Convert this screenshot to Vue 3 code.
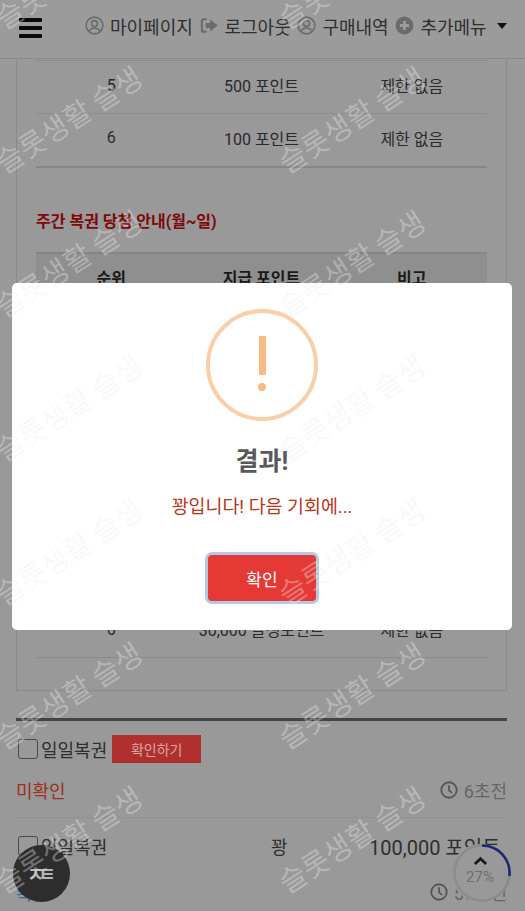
<script setup>
const firstRows = [
  { rank: 5, point: '500 포인트', note: '제한 없음' },
  { rank: 6, point: '100 포인트', note: '제한 없음' }
]
const weekRows = [
  { rank: 1, point: '1,000,000 슬생포인트', note: '제한 없음' },
  { rank: 2, point: '500,000 슬생포인트', note: '제한 없음' },
  { rank: 3, point: '300,000 슬생포인트', note: '제한 없음' },
  { rank: 4, point: '100,000 슬생포인트', note: '제한 없음' },
  { rank: 5, point: '50,000 슬생포인트', note: '제한 없음' },
  { rank: 6, point: '30,000 슬생포인트', note: '제한 없음' }
]
const marks = Array.from({ length: 14 }, (_, i) => i)
</script>

<template>
  <div class="page">
    <header class="topbar">
      <button class="burger"><span></span><span></span><span></span></button>
      <nav class="nav">
        <a class="nav-item">
          <svg class="ico" viewBox="0 0 20 20"><circle cx="10" cy="10" r="8.8" class="line" /><circle cx="10" cy="8" r="3.1" class="line" /><path d="M4.6 16c.8-2.4 2.6-3.4 5.4-3.4s4.6 1 5.4 3.4" class="line" /></svg>
          마이페이지
        </a>
        <a class="nav-item">
          <svg class="ico" viewBox="0 0 20 20"><path d="M7 3.5H3.6C2.7 3.5 2 4.2 2 5.1v9.8c0 .9.7 1.6 1.6 1.6H7" class="line thick" /><path d="M10.8 3.6 18.6 10l-7.8 6.4v-3.7H6V7.3h4.8z" fill="#6b6b6b" /></svg>
          로그아웃
        </a>
        <a class="nav-item">
          <svg class="ico" viewBox="0 0 20 20"><circle cx="10" cy="10" r="8.8" class="line" /><circle cx="10" cy="8" r="3.1" class="line" /><path d="M4.6 16c.8-2.4 2.6-3.4 5.4-3.4s4.6 1 5.4 3.4" class="line" /></svg>
          구매내역
        </a>
        <a class="nav-item">
          <svg class="ico" viewBox="0 0 20 20"><circle cx="10" cy="10" r="9.4" fill="#6b6b6b" /><path d="M10 5.2v9.6M5.2 10h9.6" stroke="#9b9b9b" stroke-width="3" fill="none" /></svg>
          추가메뉴
        </a>
        <i class="caret"></i>
      </nav>
    </header>

    <main class="content">
      <section class="guide">
        <table class="prize">
          <tbody>
            <tr v-for="row in firstRows" :key="row.rank">
              <td>{{ row.rank }}</td>
              <td>{{ row.point }}</td>
              <td>{{ row.note }}</td>
            </tr>
          </tbody>
        </table>

        <h4 class="guide-title">주간 복권 당첨 안내(월~일)</h4>

        <table class="prize week">
          <thead>
            <tr><th>순위</th><th>지급 포인트</th><th>비고</th></tr>
          </thead>
          <tbody>
            <tr v-for="row in weekRows" :key="row.rank">
              <td>{{ row.rank }}</td>
              <td>{{ row.point }}</td>
              <td>{{ row.note }}</td>
            </tr>
          </tbody>
        </table>
      </section>

      <section class="result-list">
        <div class="select-row">
          <span class="check"></span>
          <span class="ticket">일일복권</span>
          <button class="confirm-btn">확인하기</button>
        </div>
        <div class="status-row">
          <span class="unread">미확인</span>
          <span class="time">
            <svg class="clock" viewBox="0 0 20 20"><circle cx="10" cy="10" r="8.6" /><path d="M10 4.8V10.4l3.4 2.8" /></svg>
            6초전
          </span>
        </div>
        <div class="item-row">
          <span class="item-name">
            <span class="check"></span>
            <span class="ticket">일일복권</span>
          </span>
          <span class="item-result">꽝</span>
          <span class="item-point">100,000 포인트</span>
        </div>
        <div class="status-row last">
          <span class="read">확인</span>
          <span class="time">
            <svg class="clock" viewBox="0 0 20 20"><circle cx="10" cy="10" r="8.6" /><path d="M10 4.8V10.4l3.4 2.8" /></svg>
            55초전
          </span>
        </div>
      </section>
    </main>

    <button class="fab-left">ㅈㅌ</button>
    <div class="fab-top">
      <svg class="progress" viewBox="0 0 58 58">
        <circle cx="29" cy="29" r="27.5" class="track" />
        <path d="M29 1.5A27.5 27.5 0 0 1 56.4 32.2" class="arc" />
      </svg>
      <svg class="chevron" viewBox="0 0 16 10"><path d="M2 8.2 8 2.6l6 5.6" /></svg>
      <span class="percent">27%</span>
    </div>

    <div class="modal-wrap">
      <div class="modal">
        <div class="warn-icon">
          <span class="warn-bar"></span>
          <span class="warn-dot"></span>
        </div>
        <h2 class="modal-title">결과!</h2>
        <p class="modal-text">꽝입니다! 다음 기회에...</p>
        <button class="modal-btn">확인</button>
      </div>
    </div>

    <div class="watermark">
      <span v-for="m in marks" :key="m" class="mark"><span>슬롯생활 슬생</span></span>
    </div>
  </div>
</template>

<style>
html, body {
  margin: 0;
  background: #999;
}
</style>

<style scoped>
.page {
  position: relative;
  width: 525px;
  height: 911px;
  overflow: hidden;
  background: #999;
  color: #2a2a2a;
  font-family: Roboto, "Noto Sans CJK KR", sans-serif;
  font-size: 16px;
}

.topbar {
  display: flex;
  align-items: center;
  height: 58px;
  padding-left: 19px;
  background: #9b9b9b;
  border-bottom: 1px solid #8b8b8b;
}

.burger {
  display: flex;
  flex-direction: column;
  gap: 4.5px;
  width: 23px;
  padding: 0;
  margin-top: -2px;
  border: 0;
  background: none;
}

.burger span {
  height: 3.5px;
  background: #0a0a0a;
  border-radius: 1px;
}

.nav {
  display: flex;
  align-items: center;
  gap: 6.7px;
  margin-left: 43px;
  margin-top: -7px;
}

.nav-item {
  display: flex;
  align-items: center;
  gap: 6px;
  font-size: 18px;
  color: #2e2e2e;
  white-space: nowrap;
}

.ico {
  width: 19px;
  height: 19px;
  flex: none;
}

.line {
  fill: none;
  stroke: #6b6b6b;
  stroke-width: 1.7;
}

.line.thick {
  stroke-width: 2.2;
}

.caret {
  width: 0;
  height: 0;
  margin-left: 4px;
  border-left: 5px solid transparent;
  border-right: 5px solid transparent;
  border-top: 6px solid #111;
}

.content {
  padding: 0 18px 0 16px;
}

.guide {
  height: 632px;
  border: 1px solid #8a8a8a;
  border-top: 0;
  box-sizing: border-box;
  padding: 1px 19px 0;
}

.prize {
  width: 100%;
  border-collapse: collapse;
  table-layout: fixed;
  border-bottom: 2px solid #868686;
}

.prize td,
.prize th {
  box-sizing: border-box;
  height: 53px;
  padding: 0 0 4px;
  text-align: center;
  border-top: 1px solid #8c8c8c;
  font-weight: 400;
  color: #2a2a2a;
}

.prize th {
  font-weight: 700;
  color: #1a1a1a;
}

.guide-title {
  margin: 43px 0 19px;
  font-size: 16px;
  line-height: 22px;
  font-weight: 700;
  color: #7d0a0a;
}

.week {
  border-bottom: 1px solid #8a8a8a;
}

.week th {
  height: 52px;
  background: #8f8f8f;
  border-top: 2px solid #858585;
}

.week td {
  height: 60px;
}

.week tr:last-child td {
  height: 53px;
}

.result-list {
  margin-top: 27px;
  border-top: 3px solid #444;
}

.select-row {
  display: flex;
  align-items: center;
  height: 44px;
  padding-left: 2px;
  margin-top: 6px;
}

.check {
  width: 18px;
  height: 18px;
  flex: none;
  border: 1px solid #4a4a4a;
  border-radius: 3px;
}

.ticket {
  margin-left: 3px;
  font-size: 18px;
  color: #2e2e2e;
}

.confirm-btn {
  width: 89px;
  height: 28px;
  margin-left: 5px;
  padding: 0;
  border: 0;
  background: #b03030;
  color: #dba5a5;
  font: inherit;
  font-size: 14px;
}

.status-row {
  display: flex;
  align-items: center;
  justify-content: space-between;
  height: 36px;
  margin-top: 1px;
  padding-bottom: 9px;
  border-bottom: 1px solid #919191;
  font-size: 18px;
}

.status-row.last {
  border-bottom: 0;
  margin-top: 0;
}

.unread {
  color: #a0301a;
}

.read {
  color: #2a6aa0;
}

.time {
  display: flex;
  align-items: center;
  gap: 6px;
  color: #666;
}

.clock {
  width: 18px;
  height: 18px;
  fill: none;
  stroke: #555;
  stroke-width: 2;
}

.item-row {
  display: grid;
  grid-template-columns: 255px 98px 1fr;
  align-items: center;
  height: 56px;
  font-size: 18px;
  color: #2e2e2e;
}

.item-name {
  display: flex;
  align-items: center;
  padding-left: 2px;
}

.item-point {
  white-space: nowrap;
  font-size: 20px;
}

.fab-left {
  position: absolute;
  left: 13px;
  top: 845px;
  width: 57px;
  height: 57px;
  padding: 0 6px 0 0;
  border: 0;
  border-radius: 50%;
  background: #2d2d2d;
  color: #b4b4b4;
  font: inherit;
  font-size: 19px;
  font-weight: 700;
  letter-spacing: -6px;
}

.fab-top {
  position: absolute;
  left: 451px;
  top: 844px;
  width: 58px;
  height: 58px;
  border-radius: 50%;
  background: #999;
  display: flex;
  flex-direction: column;
  align-items: center;
}

.progress {
  position: absolute;
  inset: 0;
  width: 62px;
  height: 58px;
  overflow: visible;
}

.track {
  fill: none;
  stroke: #8c8c8c;
  stroke-width: 2.6;
}

.arc {
  fill: none;
  stroke: #1f2670;
  stroke-width: 2.6;
}

.chevron {
  width: 15px;
  height: 10px;
  margin-top: 12px;
  fill: none;
  stroke: #1a1a1a;
  stroke-width: 3;
}

.percent {
  margin-top: 2px;
  font-size: 15px;
  color: #707070;
}

.modal-wrap {
  position: absolute;
  inset: 0;
  padding: 283px 0 0 12px;
  box-sizing: border-box;
}

.modal {
  width: 500px;
  height: 347px;
  box-sizing: border-box;
  padding-top: 26px;
  background: #fff;
  border-radius: 5px;
  display: flex;
  flex-direction: column;
  align-items: center;
}

.warn-icon {
  width: 112px;
  height: 112px;
  box-sizing: border-box;
  border: 4px solid #facea8;
  border-radius: 50%;
  display: flex;
  flex-direction: column;
  align-items: center;
  padding-top: 23px;
}

.warn-bar {
  width: 7px;
  height: 39px;
  border-radius: 1px;
  background: #f8bb86;
}

.warn-dot {
  width: 8px;
  height: 8px;
  margin-top: 8px;
  border-radius: 50%;
  background: #f8bb86;
}

.modal-title {
  margin: 21px 0 0;
  font-size: 25px;
  line-height: 40px;
  font-weight: 700;
  color: #595959;
}

.modal-text {
  margin: 10px 0 0;
  font-size: 18.4px;
  line-height: 30px;
  color: #b5361c;
}

.modal-btn {
  width: 108px;
  height: 46px;
  margin-top: 33px;
  padding: 0;
  border: 0;
  border-radius: 4px;
  background: #e53935;
  box-shadow: 0 0 0 3px #b3c8e2;
  color: #fff;
  font: inherit;
  font-size: 17px;
}

.watermark {
  position: absolute;
  left: -74px;
  top: -98px;
  display: grid;
  grid-template-columns: repeat(2, 283px);
  grid-auto-rows: 144px;
  pointer-events: none;
}

.mark {
  display: flex;
  align-items: center;
  justify-content: center;
  white-space: nowrap;
  font-size: 29px;
  color: rgba(238, 238, 238, 0.36);
}

.mark span {
  display: block;
  transform: rotate(-33deg);
}
</style>
